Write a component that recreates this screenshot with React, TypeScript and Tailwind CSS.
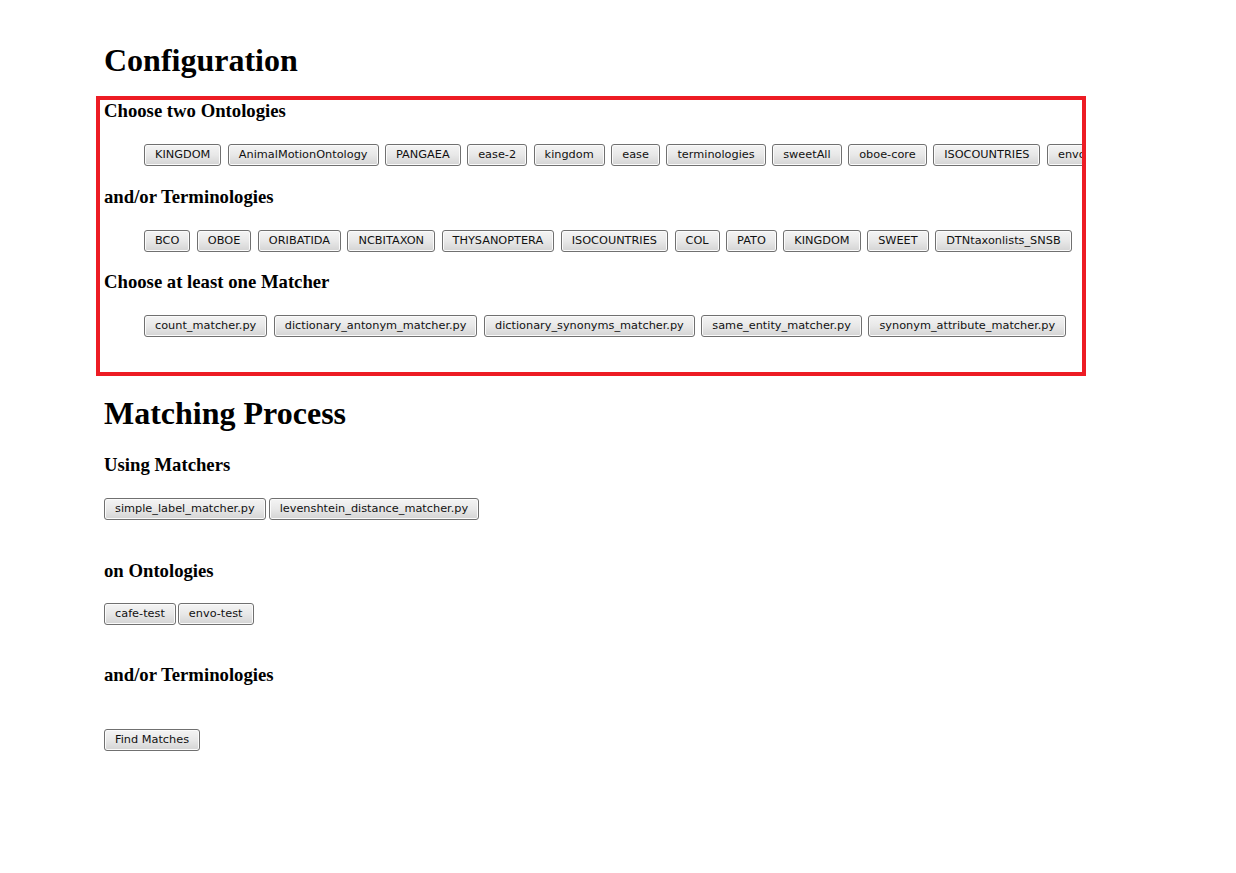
const ontologies = [
  "KINGDOM",
  "AnimalMotionOntology",
  "PANGAEA",
  "ease-2",
  "kingdom",
  "ease",
  "terminologies",
  "sweetAll",
  "oboe-core",
  "ISOCOUNTRIES",
  "envo",
];

const terminologies = [
  "BCO",
  "OBOE",
  "ORIBATIDA",
  "NCBITAXON",
  "THYSANOPTERA",
  "ISOCOUNTRIES",
  "COL",
  "PATO",
  "KINGDOM",
  "SWEET",
  "DTNtaxonlists_SNSB",
];

const matchers = [
  "count_matcher.py",
  "dictionary_antonym_matcher.py",
  "dictionary_synonyms_matcher.py",
  "same_entity_matcher.py",
  "synonym_attribute_matcher.py",
];

function Btn({ label }: { label: string }) {
  return (
    <button className="h-[22px] shrink-0 whitespace-nowrap rounded-[3px] border border-[#707070] bg-gradient-to-b from-[#f4f4f4] via-[#e8e8e8] to-[#d4d4d4] px-[10px] font-['DejaVu_Sans',sans-serif] text-[11.3px] leading-[20px] text-[#111] shadow-[inset_0_0_0_1px_#fbfbfb]">
      {label}
    </button>
  );
}

function H1({ children, className = "" }: { children: React.ReactNode; className?: string }) {
  return (
    <h1 className={`h-[37px] font-['Liberation_Serif',serif] text-[32px] font-bold leading-[37px] text-black ${className}`}>
      {children}
    </h1>
  );
}

function H3({ children, className = "" }: { children: React.ReactNode; className?: string }) {
  return (
    <h3 className={`h-[22px] font-['Liberation_Serif',serif] text-[18.72px] font-bold leading-[22px] text-black ${className}`}>
      {children}
    </h3>
  );
}

function Row({ items }: { items: string[] }) {
  return (
    <div className="flex flex-nowrap gap-[6.5px] pl-[40px]">
      {items.map((item, i) => (
        <Btn key={i} label={item} />
      ))}
    </div>
  );
}

export default function App() {
  return (
    <div className="min-h-screen bg-white pl-[104px] pt-[42px]">
      <H1>Configuration</H1>

      {/* highlighted configuration box */}
      <div className="-ml-[8px] mt-[17px] w-[990px] overflow-hidden border-4 border-[#ed1c24] pb-[35px] pl-[4px]">
        <H3>Choose two Ontologies</H3>
        <div className="mt-[22px]">
          <Row items={ontologies} />
        </div>
        <H3 className="mt-[19.5px]">and/or Terminologies</H3>
        <div className="mt-[22px]">
          <Row items={terminologies} />
        </div>
        <H3 className="mt-[19.5px]">Choose at least one Matcher</H3>
        <div className="mt-[22px]">
          <Row items={matchers} />
        </div>
      </div>

      <H1 className="mt-[19px]">Matching Process</H1>
      <H3 className="mt-[22px]">Using Matchers</H3>
      <div className="mt-[22px] flex gap-[3px]">
        <Btn label="simple_label_matcher.py" />
        <Btn label="levenshtein_distance_matcher.py" />
      </div>

      <H3 className="mt-[40px]">on Ontologies</H3>
      <div className="mt-[21px] flex gap-[2px]">
        <Btn label="cafe-test" />
        <Btn label="envo-test" />
      </div>

      <H3 className="mt-[39px]">and/or Terminologies</H3>
      <div className="mt-[43px] flex">
        <Btn label="Find Matches" />
      </div>
    </div>
  );
}
